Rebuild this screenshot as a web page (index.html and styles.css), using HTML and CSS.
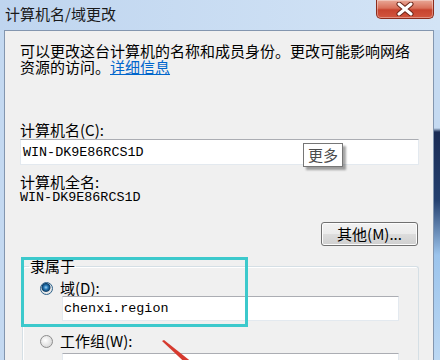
FILE: index.html
```html
<!DOCTYPE html>
<html lang="zh-CN">
<head>
  <meta charset="UTF-8" />
  <title>计算机名/域更改</title>
  <link rel="stylesheet" href="styles.css">
</head>
<body>
  <div class="window">
    <div class="titlebar">
      <span class="title">计算机名/域更改</span>
      <div class="close">
        <svg width="20" height="14" viewBox="0 0 20 14">
          <path d="M4 2 L16 12 M16 2 L4 12" stroke="#6a2418" stroke-width="5" stroke-linecap="round"/>
          <path d="M4 2 L16 12 M16 2 L4 12" stroke="#fff" stroke-width="3" stroke-linecap="round"/>
        </svg>
      </div>
    </div>

    <div class="frame">
      <div class="edge-left"></div>
      <div class="client">
        <p class="intro">可以更改这台计算机的名称和成员身份。更改可能影响网络<br>资源的访问。<a href="#">详细信息</a></p>

        <div class="label label-first">计算机名(C):</div>
        <div class="field">
          <span class="mono">WIN-DK9E86RCS1D</span>
          <div class="tip">更多</div>
        </div>

        <div class="label label-full">计算机全名:</div>
        <div class="mono value">WIN-DK9E86RCS1D</div>

        <div class="actions">
          <button class="btn">其他(M)...</button>
        </div>

        <fieldset class="group">
          <legend>隶属于</legend>
          <div class="option">
            <span class="radio checked"></span>
            <span>域(D):</span>
          </div>
          <div class="field field-inset"><span class="mono">chenxi.region</span></div>
          <div class="option option-second">
            <span class="radio"></span>
            <span>工作组(W):</span>
          </div>
          <div class="field field-inset field-last"></div>
        </fieldset>

        <!-- annotations drawn over the dialog -->
        <div class="highlight"></div>
        <svg class="arrow" width="50" height="40" viewBox="0 0 50 40">
          <polygon points="6,8 8,7 42,34 38,38" fill="#d63a2f"/>
        </svg>
      </div>
      <div class="edge-right"></div>
    </div>
  </div>
</body>
</html>
```

FILE: styles.css
```css
body {
  margin: 0;
  width: 440px;
  height: 360px;
  overflow: hidden;
  background: #c6daf1;
  font-family: "Noto Sans CJK SC", "Liberation Sans", sans-serif;
  font-size: 15px;
  color: #000;
}
.window {
  width: 440px;
  height: 360px;
  display: flex;
  flex-direction: column;
  overflow: hidden;
}
.titlebar {
  height: 30px;
  flex: none;
  display: flex;
  justify-content: space-between;
  align-items: flex-start;
  background: linear-gradient(to right, #bfd5ef, #d3e4f6);
}
.title {
  padding: 4px 0 0 5px;
  font-size: 15px;
  line-height: 20px;
  color: #1a1a1a;
}
.close {
  width: 56px;
  height: 18px;
  margin-right: 6px;
  border: 1px solid #8c2c1c;
  border-top: none;
  border-radius: 0 0 5px 5px;
  background: linear-gradient(#e9a897, #d9705a 45%, #c7432e 55%, #d2563e);
  display: flex;
  align-items: center;
  justify-content: center;
  box-shadow: inset 0 0 0 1px rgba(255,255,255,0.35);
}
.frame {
  flex: 1;
  min-height: 0;
  display: flex;
}
.edge-left {
  width: 4px;
  background: #c4d9f1;
}
.edge-right {
  width: 6px;
  background: linear-gradient(#c5daf1 0, #c5daf1 98px, #1b2c54 102px, #24406f 170px, #9cc4ec 225px, #bcd8f3 100%);
}
.client {
  flex: 1;
  position: relative;
  overflow: hidden;
  background: #f0f0f0;
  border: 1px solid #8396af;
  border-bottom: none;
  padding: 0 14px 0 15px;
}
.intro {
  margin: 12px 0 0;
  line-height: 16px;
}
.intro a {
  color: #0066cc;
  text-decoration: underline;
}
.label {
  line-height: 16px;
}
.label-first {
  margin-top: 47px;
}
.label-full {
  margin-top: 9px;
}
.mono {
  font-family: "Liberation Mono", monospace;
  font-size: 13.4px;
}
.value {
  line-height: 16px;
}
.field {
  position: relative;
  height: 24px;
  margin-top: 1px;
  padding-left: 2px;
  background: #fff;
  border: 1px solid #e3e9ef;
  border-top-color: #abadb3;
  display: flex;
  align-items: center;
}
.tip {
  position: absolute;
  left: 282px;
  top: 3px;
  padding: 0 4px;
  height: 22px;
  line-height: 22px;
  background: #fff;
  border: 1px solid #767676;
  color: #4c4c4c;
  box-shadow: 3px 3px 2px rgba(0,0,0,0.35);
}
.actions {
  display: flex;
  justify-content: flex-end;
  margin-top: 16px;
  padding-right: 1px;
}
.btn {
  width: 97px;
  height: 24px;
  padding: 0;
  font-family: inherit;
  font-size: 15px;
  line-height: 20px;
  color: #000;
  border: 1px solid #707070;
  border-radius: 3px;
  background: linear-gradient(#f2f2f2, #ebebeb 50%, #dddddd 50%, #cfcfcf);
  box-shadow: inset 0 0 0 1px #fcfcfc;
}
.group {
  margin: 12px 0 0 2px;
  padding: 6px 19px 0 17px;
  border: 1px solid #d5dfe5;
  border-bottom: none;
  border-radius: 3px 3px 0 0;
  box-shadow: inset 1px 1px 0 #fff;
  min-width: 0;
}
.group legend {
  margin-left: -11px;
  padding: 0 1px;
  line-height: 16px;
}
.option {
  display: flex;
  align-items: center;
  gap: 7px;
  line-height: 16px;
}
.option-second {
  margin-top: 12px;
}
.radio {
  width: 13px;
  height: 13px;
  border-radius: 50%;
  border: 1px solid #8d8d8d;
  background: radial-gradient(circle at 40% 40%, #ffffff, #dcdcdc 70%, #c8c8c8);
  box-sizing: border-box;
}
.radio.checked {
  border-color: #2c628b;
  background: radial-gradient(circle at 45% 40%, #9fd3f5 0, #2a7cb8 2px, #0d3f6a 4px, #eaeaea 5px, #d2d2d2 100%);
}
.field-inset {
  margin: 0 0 0 22px;
  height: 23px;
  padding-left: 1px;
}
.field-last {
  margin-top: 4px;
  height: 10px;
}
.highlight {
  position: absolute;
  left: 16px;
  top: 226px;
  width: 221px;
  height: 64px;
  border: 3px solid #3cc9cc;
}
.arrow {
  position: absolute;
  left: 151px;
  top: 302px;
}
```
